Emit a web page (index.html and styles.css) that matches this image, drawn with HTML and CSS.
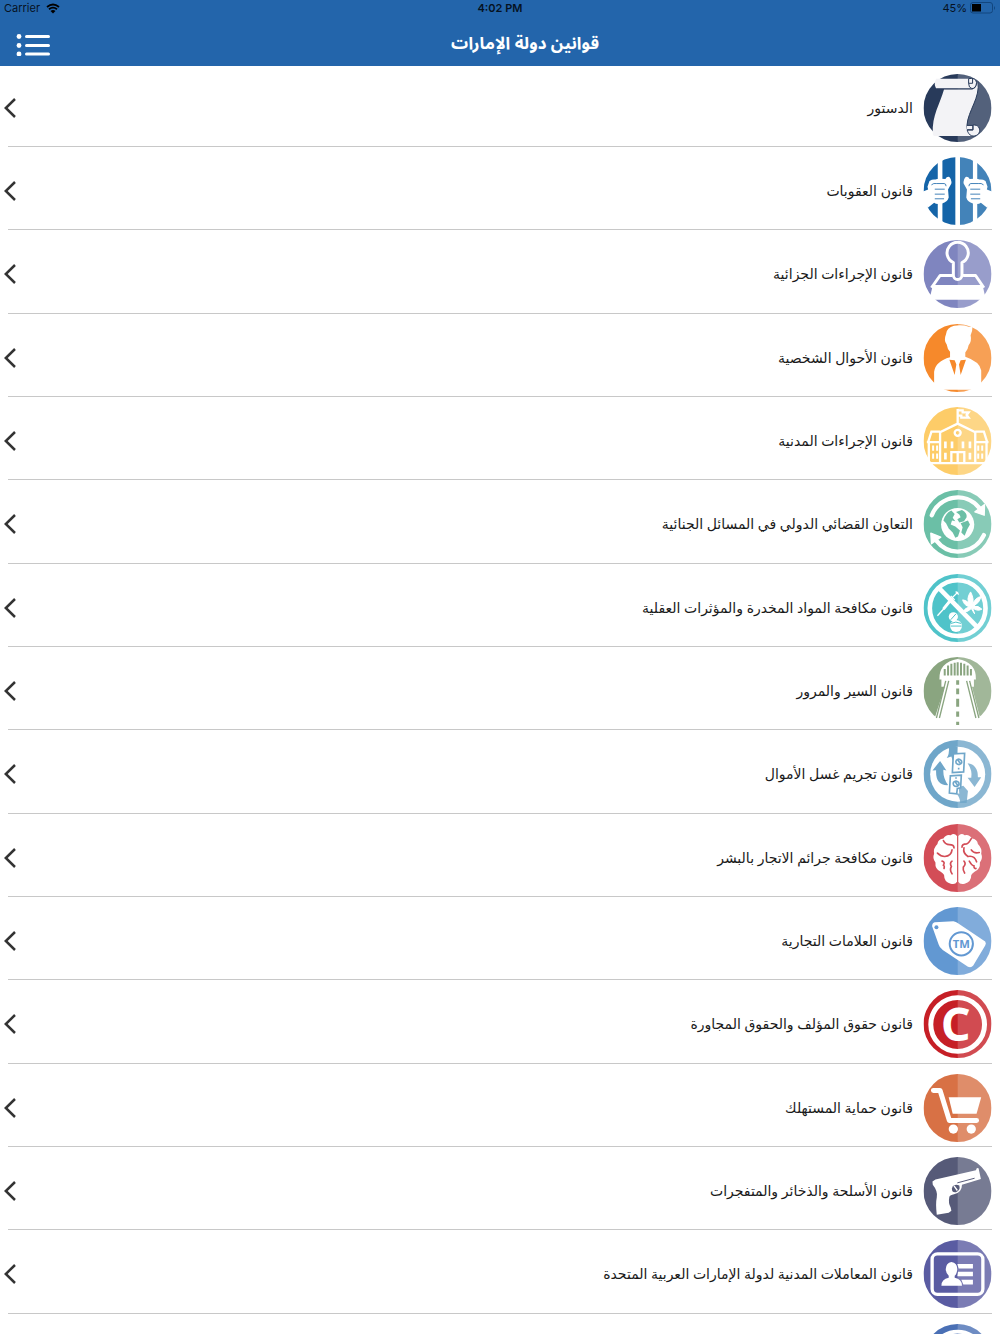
FILE: index.html
```html
<!DOCTYPE html>
<html lang="ar" dir="rtl">
<head>
<meta charset="utf-8">
<meta name="viewport" content="width=device-width, initial-scale=1">
<title>قوانين دولة الإمارات</title>
<link rel="stylesheet" href="styles.css">
</head>
<body>
<header class="top">
  <div class="status" dir="ltr">
    <span class="status-side">Carrier
      <svg class="wifi" viewBox="0 0 14 11" aria-hidden="true"><path d="M1 4Q7-1 13 4M3 6.300Q7 3 11 6.300" fill="none" stroke="#000" stroke-width="1.800"/><path d="M4.500 8Q7 6 9.500 8L7 10.500Z"/></svg>
    </span>
    <span class="status-time">4:02 PM</span>
    <span class="status-side status-end">45%
      <svg class="battery" viewBox="0 0 26 12" aria-hidden="true"><rect x=".5" y=".5" width="22" height="10.500" rx="2.500" fill="none" stroke="#12467e"/><rect x="2" y="2" width="9" height="7.500"/><path d="M24 4q2 2 0 4z" fill="#12467e"/></svg>
    </span>
  </div>
  <div class="nav">
    <h1 class="title">قوانين دولة الإمارات</h1>
    <button class="menu" type="button" aria-label="القائمة">
      <svg viewBox="0 0 34 22" aria-hidden="true"><g fill="#fff"><circle cx="3" cy="2.500" r="2.400"/><circle cx="3" cy="11.500" r="2.400"/><circle cx="3" cy="20" r="2.400"/></g><path d="M10.500 2.500H32.500M10.500 11.500H32.500M10.500 20H32.500" stroke="#fff" stroke-width="3" stroke-linecap="round"/></svg>
    </button>
  </div>
</header>

<svg class="defs" aria-hidden="true">
  <symbol id="disc" viewBox="0 0 205 205"><circle cx="102.500" cy="102.500" r="102.500" fill="currentColor"/><path d="M103 0A102.500 102.500 0 0 1 103 205Z" fill="#fff" opacity=".2"/></symbol>
  <symbol id="chevron" viewBox="0 0 12 20"><path d="M11 1 1.800 10 11 19" fill="none" stroke="#333" stroke-width="2.500"/></symbol>
</svg>

<main class="content">
<ul class="list">
  <li class="item"><a class="row" href="#"><svg class="icon navy" viewBox="0 0 205 205" aria-hidden="true"><use href="#disc"/>
    <g fill="#f3f3f6" stroke="currentColor" stroke-width="3"><path d="M62 46C50 90 25 125 28 180q0 7 6 7H150Q130 178 131 155C134 110 172 72 164 22Q160 44 148 46Z" stroke="none"/><path d="M150 187Q130 178 131 155C134 110 172 72 164 22" fill="none"/><path d="M38 14H148V44H38Q30 30 38 14Z" stroke="none"/><path d="M38 45H148"/><path d="M136 28V14q22-4 24 12q-2 18-14 18q-10-2-10-16h12v-14"/><path d="M131 155h18v14h-18M149 154c16-2 22 10 20 20c-4 14-24 18-32 6c-4-5-5-10-5-12h17z"/></g>
    </svg><span class="label">الدستور</span><svg class="chevron" aria-hidden="true"><use href="#chevron"/></svg></a></li>

  <li class="item"><a class="row" href="#"><svg class="icon blue" viewBox="0 0 205 205" aria-hidden="true"><use href="#disc"/>
    <g fill="#fff"><path d="M43 0H57V205H43ZM96 0H110V205H96ZM149 0H162V205H149Z"/><path d="M-2 104 14 98 12 90 18 72Q28 66 36 68Q40 64 66 66Q70 58 78 60Q86 68 84 80L74 98 76 122Q72 136 56 140Q40 144 32 138L14 152-2 140Z"/><path d="M207 104 191 98 193 90 187 72Q177 66 169 68Q165 64 139 66Q135 58 127 60Q119 68 121 80L131 98 129 122Q133 136 149 140Q165 144 173 138L191 152 207 140Z"/></g>
    <path d="M24 84Q30 78 40 80H62Q68 80 68 88M34 97H64M34 112H64M34 126H62M181 84Q175 78 165 80H143Q137 80 137 88M171 97H141M171 112H141M171 126H143" fill="none" stroke="currentColor" stroke-width="3" opacity=".8"/>
    </svg><span class="label">قانون العقوبات</span><svg class="chevron" aria-hidden="true"><use href="#chevron"/></svg></a></li>

  <li class="item"><a class="row" href="#"><svg class="icon lilac" viewBox="0 0 205 205" aria-hidden="true"><use href="#disc"/>
    <path d="M86 107H50L24 144M120 107H157L182 144M90 68A32 32 0 1 1 116 68V106A13 13 0 0 1 90 106Z" fill="none" stroke="#fff" stroke-width="9" stroke-linejoin="round"/><path d="M28 136H178L188 180H18Z" fill="#fff"/>
    </svg><span class="label">قانون الإجراءات الجزائية</span><svg class="chevron" aria-hidden="true"><use href="#chevron"/></svg></a></li>

  <li class="item"><a class="row" href="#"><svg class="icon orange" viewBox="0 0 205 205" aria-hidden="true"><use href="#disc"/>
    <path d="M68 30Q70 10 92 5Q120 2 136 8Q144 10 148 4Q148 22 142 34Q146 52 136 64Q134 78 126 86V99Q170 114 174 140V198H32V144Q36 112 80 100V84Q72 76 70 62Q60 50 68 30Z" fill="#fff"/><path d="M78 108 94 154 99 122 94 109ZM128 108 112 154 107 122 112 109Z" fill="currentColor"/>
    </svg><span class="label">قانون الأحوال الشخصية</span><svg class="chevron" aria-hidden="true"><use href="#chevron"/></svg></a></li>

  <li class="item"><a class="row" href="#"><svg class="icon yellow" viewBox="0 0 205 205" aria-hidden="true"><use href="#disc"/>
    <g fill="none" stroke="#fff" stroke-width="7"><path d="M103 50V6M103 10H118V16H136L130 24 136 32H114V26H104M50 168V76L103 50 156 76V168M50 74H24L14 106M156 74H182L192 106M10 106H50M156 106H196M16 106V168M190 106V168M8 169H198M84 168V136H123V168M103 136V168"/><circle cx="103" cy="78" r="9"/></g><path d="M62 104h8v20h-8zM82 104h8v20h-8zM115 104h8v20h-8zM136 104h8v20h-8zM62 138h8v20h-8zM136 138h8v20h-8zM26 116h6v16h-6zM38 116h6v16h-6zM162 116h6v16h-6zM174 116h6v16h-6zM26 140h6v16h-6zM38 140h6v16h-6zM162 140h6v16h-6zM174 140h6v16h-6z" fill="#fff"/>
    </svg><span class="label">قانون الإجراءات المدنية</span><svg class="chevron" aria-hidden="true"><use href="#chevron"/></svg></a></li>

  <li class="item"><a class="row" href="#"><svg class="icon green" viewBox="0 0 205 205" aria-hidden="true"><use href="#disc"/>
    <path d="M25 76C48 18 126 2 168 54M182 136C158 188 82 208 38 152" fill="none" stroke="#fff" stroke-width="13" stroke-linecap="round"/><path d="M183 76 184 44 155 66ZM22 130 24 162 52 142Z" fill="#fff" stroke="#fff" stroke-width="4" stroke-linejoin="round"/><circle cx="103" cy="104" r="50" fill="#fff"/><path d="M60 92Q66 70 84 62L94 72 88 84 96 94 86 92 82 104 96 110 110 122 104 140 96 144 88 128 76 116 68 100ZM98 66 116 60Q132 68 130 82L122 94 108 98 102 88 112 82 108 74ZM112 100 134 92 140 104 132 118 124 138 114 128 118 112Z" fill="currentColor"/>
    </svg><span class="label">التعاون القضائي الدولي في المسائل الجنائية</span><svg class="chevron" aria-hidden="true"><use href="#chevron"/></svg></a></li>

  <li class="item"><a class="row" href="#"><svg class="icon teal" viewBox="0 0 205 205" aria-hidden="true"><use href="#disc"/>
    <circle cx="103" cy="103" r="84" fill="none" stroke="#fff" stroke-width="14"/><path d="M46 42 162 160" stroke="#fff" stroke-width="14"/><path d="M42 126 62 104M60 104 88 70M86 72 104 54M82 66 94 78M97 53 106 62" stroke="#fff" stroke-width="4"/><path d="M60 106 84 76" stroke="#fff" stroke-width="9"/><path d="M142 96Q126 76 142 54Q154 76 147 94Q156 70 174 68Q170 86 150 98Q166 94 176 106Q162 114 148 102L154 120 144 104Q134 116 120 114Q124 102 140 99Q122 96 118 78Q134 80 142 96Z" fill="#fff" stroke="#fff" stroke-width="3"/><circle cx="90" cy="129" r="14" fill="#fff"/><circle cx="98" cy="157" r="18" fill="#fff"/><path d="M82 138 98 120M82 157H115M83 149q14-8 30 0" fill="none" stroke="currentColor" stroke-width="3"/>
    </svg><span class="label">قانون مكافحة المواد المخدرة والمؤثرات العقلية</span><svg class="chevron" aria-hidden="true"><use href="#chevron"/></svg></a></li>

  <li class="item"><a class="row" href="#"><svg class="icon olive" viewBox="0 0 205 205" aria-hidden="true"><use href="#disc"/>
    <path d="M54 90V68H48Q46 16 103 6Q160 16 158 68H152V90H146L172 190 160 205H44L32 190 64 90Z" fill="#fff"/><path d="M64 56V36M74 56V26M84 56V20M94 56V17M103 56V16M113 56V17M123 56V20M133 56V26M143 56V36" stroke="currentColor" stroke-width="6"/><path d="M103 70V84M103 95V112M103 126V150M103 164V180M103 195V205" stroke="currentColor" stroke-width="9"/><path d="M67 72 39 184M76 72 48 184M139 72 167 184M130 72 158 184" stroke="currentColor" stroke-width="4"/>
    </svg><span class="label">قانون السير والمرور</span><svg class="chevron" aria-hidden="true"><use href="#chevron"/></svg></a></li>

  <li class="item"><a class="row" href="#"><svg class="icon steel" viewBox="0 0 205 205" aria-hidden="true"><use href="#disc"/>
    <circle cx="103" cy="103" r="83" fill="#fff"/><g fill="currentColor"><path d="M27 92 50 63 69 92 60 90Q58 114 74 136Q36 138 38 91Z"/><g opacity=".8"><path d="M174 112 154 142 133 114 144 114Q148 92 133 70Q164 74 164 112Z"/><path d="M106 142 120 138 134 154 130 190 110 190Q112 176 98 160L108 162Z"/></g><path d="M77 20H103L102 54 88 62 84 50 70 54Q78 44 77 20Z"/></g><g fill="#fff" stroke="currentColor" stroke-width="5"><path d="M90 42 124 40 121 96 87 98ZM81 108 114 106 112 144 102 146 100 162 78 160Z"/><path d="M98 62q8-8 16 0q4 10-6 12q-12 0-10-12M102 58l10 14M106 84v5M90 128q8-8 16 0q4 10-6 12q-12 0-10-12M94 124l10 14M98 112v5" fill="none"/></g>
    </svg><span class="label">قانون تجريم غسل الأموال</span><svg class="chevron" aria-hidden="true"><use href="#chevron"/></svg></a></li>

  <li class="item"><a class="row" href="#"><svg class="icon rose" viewBox="0 0 205 205" aria-hidden="true"><use href="#disc"/>
    <path d="M101 36Q92 26 82 34Q68 30 60 44Q44 46 42 60Q28 74 32 90Q26 104 36 116Q34 136 52 144Q60 150 62 154Q62 176 82 180Q96 184 101 174ZM105 36Q114 26 124 34Q138 30 146 44Q162 46 164 60Q178 74 174 90Q180 104 170 116Q172 136 154 144Q146 150 144 154Q144 176 124 180Q110 184 105 174Z" fill="#fff"/><path d="M60 50Q66 62 78 62Q92 62 92 72M42 88Q52 98 64 98Q84 96 86 78M56 112Q66 114 60 124Q64 126 62 134M86 112Q78 118 84 128Q78 138 86 150M144 44Q136 58 130 60Q116 60 116 70M122 72Q118 88 134 98Q154 94 160 114M144 78Q152 90 168 86M138 112Q146 126 152 126Q152 136 158 134M122 112Q130 120 120 130Q118 140 124 148" fill="none" stroke="currentColor" stroke-width="5" stroke-linecap="round"/>
    </svg><span class="label">قانون مكافحة جرائم الاتجار بالبشر</span><svg class="chevron" aria-hidden="true"><use href="#chevron"/></svg></a></li>

  <li class="item"><a class="row" href="#"><svg class="icon sky" viewBox="0 0 205 205" aria-hidden="true"><use href="#disc"/>
    <path d="M34 46 90 43Q98 44 104 49L186 104Q190 110 186 116L150 176Q144 184 134 180L58 130Q48 122 46 114L26 58Q26 48 34 46Z" fill="#fff"/><circle cx="39" cy="61" r="6" fill="currentColor"/><circle cx="114" cy="111" r="35" fill="none" stroke="currentColor" stroke-width="6"/><text x="114" y="124" class="mark-tm">TM</text>
    </svg><span class="label">قانون العلامات التجارية</span><svg class="chevron" aria-hidden="true"><use href="#chevron"/></svg></a></li>

  <li class="item"><a class="row" href="#"><svg class="icon red" viewBox="0 0 205 205" aria-hidden="true"><use href="#disc"/>
    <circle cx="103" cy="104" r="81" fill="none" stroke="#fff" stroke-width="15"/><text x="97" y="154" class="mark-c">C</text>
    </svg><span class="label">قانون حقوق المؤلف والحقوق المجاورة</span><svg class="chevron" aria-hidden="true"><use href="#chevron"/></svg></a></li>

  <li class="item"><a class="row" href="#"><svg class="icon copper" viewBox="0 0 205 205" aria-hidden="true"><use href="#disc"/>
    <path d="M30 50H50L78 140H160" fill="none" stroke="#fff" stroke-width="15" stroke-linecap="round" stroke-linejoin="round"/><path d="M76 70H174L160 120H88Z" fill="#fff"/><circle cx="90" cy="166" r="14" fill="#fff"/><circle cx="144" cy="166" r="14" fill="#fff"/>
    </svg><span class="label">قانون حماية المستهلك</span><svg class="chevron" aria-hidden="true"><use href="#chevron"/></svg></a></li>

  <li class="item"><a class="row" href="#"><svg class="icon slate" viewBox="0 0 205 205" aria-hidden="true"><use href="#disc"/>
    <path d="M27 74 36 68 158 40 161 33 166 34 173 66 116 84Q116 108 92 112Q80 114 78 120Q74 140 82 152L84 162 76 168 40 174Q36 140 40 122Q44 104 28 84Z" fill="#fff"/><path d="M88 88Q96 80 108 86Q112 100 98 106Q84 108 86 94Z" fill="currentColor"/><path d="M92 87l10 14M102 79 154 64" stroke="#fff" stroke-width="4"/><path d="M102 78 154 64" stroke="currentColor" stroke-width="3"/>
    </svg><span class="label">قانون الأسلحة والذخائر والمتفجرات</span><svg class="chevron" aria-hidden="true"><use href="#chevron"/></svg></a></li>

  <li class="item"><a class="row" href="#"><svg class="icon indigo" viewBox="0 0 205 205" aria-hidden="true"><use href="#disc"/>
    <rect x="26" y="42" width="153" height="122" rx="16" fill="none" stroke="#fff" stroke-width="10"/><path d="M84 66Q102 68 102 88Q100 104 94 108V114Q116 118 116 138H54Q54 118 76 114V108Q68 102 67 88Q68 68 84 66ZM102 72H149V86H106ZM104 96H149V109H102ZM114 120H149V134H120Z" fill="#fff"/>
    </svg><span class="label">قانون المعاملات المدنية لدولة الإمارات العربية المتحدة</span><svg class="chevron" aria-hidden="true"><use href="#chevron"/></svg></a></li>

  <li class="item"><a class="row" href="#" aria-label="قانون"><svg class="icon royal" viewBox="0 0 205 205" aria-hidden="true"><use href="#disc"/>
    <circle cx="103" cy="103" r="80" fill="none" stroke="#fff" stroke-width="12"/>
    </svg></a></li>
</ul>
</main>
</body>
</html>
```
FILE: styles.css
```css
* { box-sizing: border-box; }

body {
  display: flex;
  flex-direction: column;
  margin: 0;
  height: 100vh;
  background: #fff;
  color: #1a1a1a;
  font-family: "Noto Sans", "DejaVu Sans", sans-serif;
}

.top { flex: none; background: #2365ab; }

.status {
  display: grid;
  grid-template-columns: 1fr auto 1fr;
  align-items: center;
  height: 16px;
  padding: 0 4px;
  color: #06121f;
  font: 11px/16px Inter, "Liberation Sans", sans-serif;
}

.status-side { display: flex; align-items: center; gap: 6px; }
.status-end { justify-content: flex-end; gap: 3px; }
.status-time { font-weight: 600; }
.wifi { width: 14px; height: 11px; }
.battery { width: 26px; height: 12px; }

.nav {
  display: flex;
  align-items: center;
  height: 50px;
  padding-left: 16px;
}

.title {
  flex: 1;
  margin: 6px 0 0;
  color: #fff;
  font-family: "Noto Sans Arabic", "DejaVu Sans", sans-serif;
  font-size: 17px;
  line-height: 28px;
  font-weight: 700;
  text-align: center;
}

.menu {
  display: flex;
  margin: 8px 0 0;
  padding: 0;
  border: 0;
  background: none;
}
.menu svg { width: 34px; height: 22px; }

.defs { display: none; }

.content {
  flex: 1;
  min-height: 0;
  overflow-y: auto;
  scrollbar-width: none;
}

.list {
  margin: 0;
  padding: 0 8px;
  list-style: none;
}

.item { border-bottom: 1px solid #c8c8c8; }

.row {
  display: flex;
  align-items: center;
  gap: 10px;
  margin-left: -4px;
  padding: 10px 0 4px;
  color: inherit;
  text-decoration: none;
}
.item:first-child .row { padding-top: 8px; }
.item:nth-child(3n) .row { padding-bottom: 5px; }

.icon { flex: none; width: 69px; height: 68px; }
.label { flex: 1; font-size: 14px; line-height: 24px; }
.chevron { flex: none; width: 12px; height: 20px; }

.mark-tm, .mark-c {
  font-family: "Open Sans", "Noto Sans", sans-serif;
  font-weight: 700;
  text-anchor: middle;
}
.mark-tm { font-size: 34px; fill: currentColor; direction: ltr; }
.mark-c { font-size: 142px; fill: #fff; direction: ltr; }

.navy { color: #283a5a; }
.blue { color: #1464a8; }
.lilac { color: #7f85bf; }
.orange { color: #f6892b; }
.yellow { color: #fdcc68; }
.green { color: #6bbfa6; }
.teal { color: #4fc3c9; }
.olive { color: #8aa580; }
.steel { color: #6fa6c9; }
.rose { color: #d34d57; }
.sky { color: #6298d2; }
.red { color: #c61f26; }
.copper { color: #d87145; }
.slate { color: #565a78; }
.indigo { color: #5a5ca2; }
.royal { color: #4a70b5; }
```
